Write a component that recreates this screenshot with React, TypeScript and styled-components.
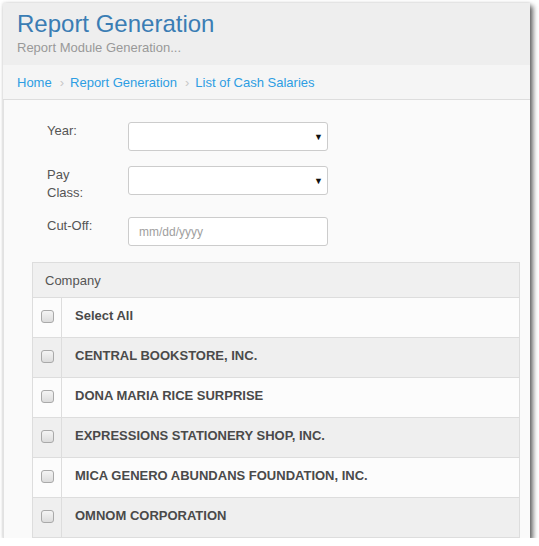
import React from 'react';
import styled, { createGlobalStyle } from 'styled-components';

const GlobalStyle = createGlobalStyle`
  html, body {
    margin: 0;
    padding: 0;
    background: #ffffff;
    font-family: "Liberation Sans", Arial, sans-serif;
  }
`;

const Window = styled.div`
  margin: 3px 0 0 3px;
  width: 527px;
  height: 535px;
  overflow: hidden;
  background: #fafafa;
  box-shadow: 3px 3px 5px rgba(0, 0, 0, 0.6), 0 0 3px rgba(0, 0, 0, 0.15);
  display: flex;
  flex-direction: column;
`;

const PageHeader = styled.div`
  background: #eeeeee;
  padding: 7px 14px 0;
  height: 55px;
`;

const Title = styled.h1`
  margin: 0;
  font-size: 24px;
  font-weight: normal;
  color: #3a7db4;
  line-height: 28px;
`;

const Subtitle = styled.div`
  margin-top: 2px;
  font-size: 13px;
  color: #999999;
  line-height: 16px;
`;

const Breadcrumb = styled.div`
  background: #f5f5f5;
  border-bottom: 1px solid #dddddd;
  height: 34px;
  padding: 0 14px;
  display: flex;
  align-items: center;
  font-size: 13px;
`;

const Crumb = styled.a`
  color: #2d9de3;
  text-decoration: none;
`;

const Sep = styled.span`
  color: #c8c8c8;
  margin: 0 6px 0 8px;
  font-size: 13px;
`;

const Body = styled.div`
  padding: 22px 9px 0 28px;
  border-left: 1px solid #e2e2e2;
`;

const Form = styled.div`
  display: grid;
  grid-template-columns: 50px 200px;
  column-gap: 31px;
  row-gap: 15px;
  padding-left: 15px;
`;

const Label = styled.div`
  font-size: 13px;
  color: #555555;
  line-height: 18px;
`;

const SelectBox = styled.div`
  height: 29px;
  box-sizing: border-box;
  background: #ffffff;
  border: 1px solid #cccccc;
  border-radius: 3px;
  display: flex;
  align-items: center;
  justify-content: flex-end;
  padding-right: 4px;
  font-size: 9px;
  color: #111111;
`;

const DateInput = styled.input`
  height: 29px;
  width: 200px;
  box-sizing: border-box;
  background: #ffffff;
  border: 1px solid #cccccc;
  border-radius: 3px;
  padding: 0 10px;
  font-family: "Liberation Sans", Arial, sans-serif;
  font-size: 12px;
  color: #555555;
  &::placeholder {
    color: #a0a0a0;
  }
`;

const Table = styled.div`
  margin-top: 16px;
  width: 488px;
  box-sizing: border-box;
  border: 1px solid #dddddd;
  border-bottom: none;
`;

const HeadCell = styled.div`
  height: 34px;
  background: #f0f0f0;
  border-bottom: 1px solid #dddddd;
  display: flex;
  align-items: center;
  padding-left: 12px;
  font-size: 13px;
  color: #555555;
`;

const Row = styled.div<{ $shade: boolean }>`
  height: 39px;
  display: flex;
  background: ${(p) => (p.$shade ? '#efefef' : '#fcfcfc')};
  border-bottom: 1px solid #dddddd;
`;

const CheckCell = styled.div`
  width: 29px;
  border-right: 1px solid #dddddd;
  display: flex;
  align-items: center;
  justify-content: center;
  padding-bottom: 3px;
  box-sizing: border-box;
`;

const Check = styled.span`
  width: 11px;
  height: 11px;
  border: 1px solid #a9a9a9;
  border-radius: 3px;
  background: linear-gradient(#f4f4f4, #dcdcdc);
`;

const NameCell = styled.div`
  flex: 1;
  display: flex;
  align-items: center;
  padding-left: 13px;
  padding-bottom: 4px;
  font-size: 13px;
  font-weight: bold;
  color: #4a4a4a;
`;

const companies = [
  'Select All',
  'CENTRAL BOOKSTORE, INC.',
  'DONA MARIA RICE SURPRISE',
  'EXPRESSIONS STATIONERY SHOP, INC.',
  'MICA GENERO ABUNDANS FOUNDATION, INC.',
  'OMNOM CORPORATION',
];

export default function App() {
  return (
    <>
      <GlobalStyle />
      <Window>
        <PageHeader>
          <Title>Report Generation</Title>
          <Subtitle>Report Module Generation...</Subtitle>
        </PageHeader>
        <Breadcrumb>
          <Crumb href="#">Home</Crumb>
          <Sep>›</Sep>
          <Crumb href="#">Report Generation</Crumb>
          <Sep>›</Sep>
          <Crumb href="#">List of Cash Salaries</Crumb>
        </Breadcrumb>
        <Body>
          <Form>
            <Label>Year:</Label>
            <SelectBox>▼</SelectBox>
            <Label>Pay Class:</Label>
            <SelectBox>▼</SelectBox>
            <Label>Cut-Off:</Label>
            <DateInput placeholder="mm/dd/yyyy" />
          </Form>
          <Table>
            <HeadCell>Company</HeadCell>
            {companies.map((c, i) => (
              <Row key={c} $shade={i % 2 === 1}>
                <CheckCell>
                  <Check />
                </CheckCell>
                <NameCell>{c}</NameCell>
              </Row>
            ))}
          </Table>
        </Body>
      </Window>
    </>
  );
}
